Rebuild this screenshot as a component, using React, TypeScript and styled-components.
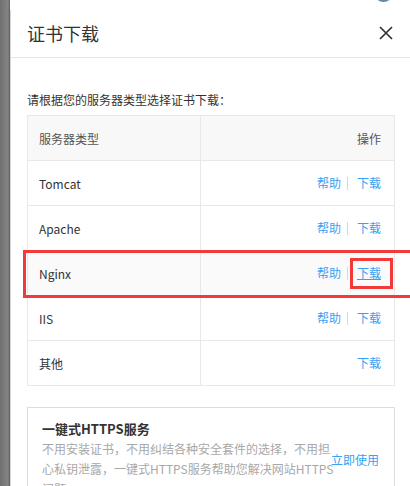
import styled, { createGlobalStyle } from 'styled-components';

const GlobalStyle = createGlobalStyle`
  html, body {
    margin: 0;
    padding: 0;
    height: 486px;
    overflow: hidden;
    background: #fff;
  }
  body {
    font-family: "Noto Sans CJK SC", "Noto Sans", sans-serif;
    color: #333;
  }
`;

const Page = styled.div`
  display: flex;
  height: 486px;
`;
const Backdrop = styled.div`
  width: 10px;
  flex: none;
  background: linear-gradient(to right, #6f6f6f, #858585 80%, #5f5f5f);
`;
const Main = styled.div`
  flex: 1;
  display: flex;
  flex-direction: column;
  min-width: 0;
`;
const TopBar = styled.div`
  height: 10px;
  position: relative;
  flex: none;
  background: #fff;
`;
const Avatar = styled.div`
  position: absolute;
  right: 17px;
  top: -17px;
  width: 19px;
  height: 19px;
  border-radius: 50%;
  background: #6a87a3;
`;
const Dialog = styled.div`
  flex: 1;
  background: #fff;
  box-shadow: 0 -3px 6px rgba(0, 0, 0, 0.05);
  border-left: 1px solid #d6d6d6;
  overflow: hidden;
`;
const Header = styled.div`
  height: 46px;
  display: flex;
  align-items: center;
  justify-content: space-between;
  padding: 0 17px 1px 16px;
  border-bottom: 1px solid #e3e3e3;
`;
const Title = styled.h2`
  margin: 0;
  font-size: 18px;
  font-weight: normal;
  color: #333;
`;
const Close = styled.button`
  border: 0;
  background: none;
  padding: 0;
  width: 14px;
  height: 14px;
  display: flex;
  cursor: pointer;
`;
const Body = styled.div`
  padding: 0 15px 0 16px;
`;
const Hint = styled.p`
  margin: 32px 0 5px;
  font-size: 12px;
  line-height: 20px;
  color: #333;
`;
const Table = styled.table`
  width: 100%;
  border-collapse: collapse;
  font-size: 12px;
`;
const Row = styled.tr<{ $highlight?: boolean }>`
  background: ${(p) => (p.$highlight ? '#fafafa' : '#fff')};
`;
const HeadRow = styled.tr`
  background: #f8f8f8;
`;
const Cell = styled.td<{ $right?: boolean }>`
  height: 44px;
  padding: 0 ${(p) => (p.$right ? '13px' : '11px')};
  border: 1px solid #e8e8e8;
  text-align: ${(p) => (p.$right ? 'right' : 'left')};
  color: ${(p) => (p.$right ? '#555' : '#333')};
  position: relative;
  &:first-child {
    width: 150px;
  }
`;
const HeadCell = styled(Cell).attrs({ as: 'th' })`
  font-weight: normal;
  color: #555;
`;
const Actions = styled.div`
  display: flex;
  justify-content: flex-end;
  align-items: center;
  margin-right: -4px;
`;
const Link = styled.a<{ $underline?: boolean }>`
  position: relative;
  display: inline-block;
  padding: 0 4px;
  line-height: 20px;
  color: #35a2f4;
  text-decoration: ${(p) => (p.$underline ? 'underline' : 'none')};
  cursor: pointer;
`;
const Sep = styled.span`
  width: 1px;
  height: 13px;
  background: #d8d8d8;
  margin: 0 5px 0 2px;
`;
const RowMark = styled.div`
  position: absolute;
  left: -5px;
  top: -1px;
  width: 420px;
  height: 48px;
  border: 3px solid #f23a3a;
  box-sizing: border-box;
  pointer-events: none;
`;
const LinkMark = styled.span`
  position: absolute;
  left: -3px;
  top: -5px;
  width: 43px;
  height: 31px;
  border: 3px solid #f23a3a;
  box-sizing: border-box;
`;
const Promo = styled.div`
  margin-top: 21px;
  border: 1px solid #dcdcdc;
  padding: 11px 14px 20px;
  display: flex;
  align-items: center;
`;
const PromoText = styled.div`
  width: 298px;
  margin-right: -9px;
  flex: none;
`;
const PromoTitle = styled.div`
  font-size: 13px;
  font-weight: bold;
  line-height: 20px;
  color: #333;
`;
const PromoDesc = styled.div`
  font-size: 12px;
  line-height: 20px;
  color: #a8a8a8;
`;
const PromoLink = styled.a`
  font-size: 12px;
  color: #35a2f4;
  white-space: nowrap;
  cursor: pointer;
`;

interface IServer {
  name: string;
  help: boolean;
  active?: boolean;
}

const servers: IServer[] = [
  { name: 'Tomcat', help: true },
  { name: 'Apache', help: true },
  { name: 'Nginx', help: true, active: true },
  { name: 'IIS', help: true },
  { name: '其他', help: false },
];

function App() {
  return (
    <>
      <GlobalStyle />
      <Page>
        <Backdrop />
        <Main>
          <TopBar>
            <Avatar />
          </TopBar>
          <Dialog>
            <Header>
              <Title>证书下载</Title>
              <Close aria-label="关闭">
                <svg width="14" height="14" viewBox="0 0 14 14">
                  <path d="M1 1 L13 13 M13 1 L1 13" stroke="#333" strokeWidth="1.7" fill="none" />
                </svg>
              </Close>
            </Header>
            <Body>
              <Hint>请根据您的服务器类型选择证书下载：</Hint>
              <Table>
                <thead>
                  <HeadRow>
                    <HeadCell>服务器类型</HeadCell>
                    <HeadCell $right>操作</HeadCell>
                  </HeadRow>
                </thead>
                <tbody>
                  {servers.map((s) => (
                    <Row key={s.name} $highlight={s.active}>
                      <Cell>
                        {s.name}
                        {s.active && <RowMark />}
                      </Cell>
                      <Cell $right>
                        <Actions>
                          {s.help && (
                            <>
                              <Link>帮助</Link>
                              <Sep />
                            </>
                          )}
                          <Link $underline={s.active}>
                            下载
                            {s.active && <LinkMark />}
                          </Link>
                        </Actions>
                      </Cell>
                    </Row>
                  ))}
                </tbody>
              </Table>
              <Promo>
                <PromoText>
                  <PromoTitle>一键式HTTPS服务</PromoTitle>
                  <PromoDesc>
                    不用安装证书，不用纠结各种安全套件的选择，不用担心私钥泄露，一键式HTTPS服务帮助您解决网站HTTPS问题。
                  </PromoDesc>
                </PromoText>
                <PromoLink>立即使用</PromoLink>
              </Promo>
            </Body>
          </Dialog>
        </Main>
      </Page>
    </>
  );
}

export default App;
